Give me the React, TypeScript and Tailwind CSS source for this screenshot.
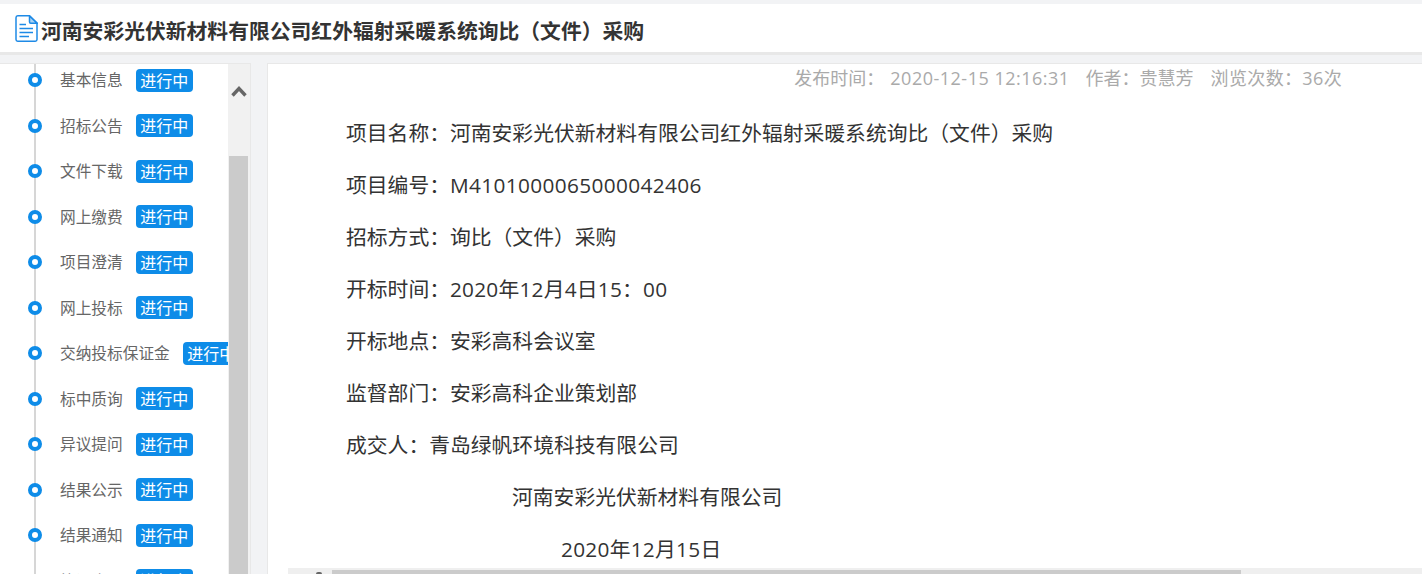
const F = { fontFamily: '"Noto Sans CJK SC", "Liberation Sans", sans-serif' };
const L = { fontFamily: '"Open Sans", "Noto Sans CJK SC", sans-serif' };

const steps = ["基本信息", "招标公告", "文件下载", "网上缴费", "项目澄清", "网上投标", "交纳投标保证金", "标中质询", "异议提问", "结果公示", "结果通知", "签订合同"];

function DocIcon() {
  return (
    <svg width="23" height="27" viewBox="0 0 23 27" fill="none" stroke="#1e8ae6" strokeWidth="1.5">
      <path d="M2.8.8H14.5L22 8V24.5a1.7 1.7 0 0 1-1.7 1.7H2.7A1.7 1.7 0 0 1 1 24.5V2.7A1.9 1.9 0 0 1 2.8.8Z" />
      <path d="M14.5 1V7a1.2 1.2 0 0 0 1.2 1.2H22Z" fill="#a9d3f5" />
      <path d="M4.5 9.5H11M4.5 13.5H18M4.5 17.5H18M4.5 21.5H14" strokeWidth="1.7" />
    </svg>
  );
}

const lines: [string, string, string][] = [
  ["项目名称：", "河南安彩光伏新材料有限公司红外辐射采暖系统询比（文件）采购", ""],
  ["项目编号：", "M4101000065000042406", "tracking-[0.35px]"],
  ["招标方式：", "询比（文件）采购", ""],
  ["开标时间：", "2020年12月4日15：00", "tracking-[0.22px]"],
  ["开标地点：", "安彩高科会议室", ""],
  ["监督部门：", "安彩高科企业策划部", ""],
  ["成交人：", "青岛绿帆环境科技有限公司", ""],
];

export default function App() {
  return (
    <div style={F} className="w-[1422px] h-[574px] overflow-hidden bg-[#f2f3f5] flex flex-col">
      <div className="mt-[4px] h-[48px] shrink-0 bg-white border-b-[3px] border-[#e8e8e8] box-content flex items-center pl-[15px]">
        <DocIcon />
        <h1 className="ml-[3px] mt-[5px] text-[20.8px] font-bold text-[#333] whitespace-nowrap">河南安彩光伏新材料有限公司红外辐射采暖系统询比（文件）采购</h1>
      </div>
      <div className="mt-[8px] flex flex-1 min-h-0">
        <aside className="w-[251px] bg-white border-r border-t border-[#e8e8e8] flex shrink-0 overflow-hidden">
          <div className="w-[228px] shrink-0 overflow-hidden relative">
            <div className="absolute left-[34px] top-0 w-[2px] h-full bg-[#d6d6d6]" />
            <div className="-mt-[6.5px]">
              {steps.map((s) => (
                <div key={s} className="h-[45.5px] flex items-center relative whitespace-nowrap">
                  <span className="ml-[28px] w-[14px] h-[14px] rounded-full border-[4px] border-[#0e8ce8] bg-white shrink-0" />
                  <span className="ml-[18px] text-[15.7px] text-[#666]">{s}</span>
                  <span className="ml-[13px] h-[23px] w-[57px] shrink-0 rounded-[4px] bg-[#0e8ce8] text-white text-[16px] leading-[23px] text-center">进行中</span>
                </div>
              ))}
            </div>
          </div>
          <div className="w-[22px] bg-[#f1f1f1] pl-[1px] flex flex-col items-start">
            <svg className="mt-[20px] ml-[2px]" width="16" height="13" viewBox="0 0 16 13" fill="none" stroke="#666" strokeWidth="3.4">
              <path d="M1.5 11.5 8 4.5l6.5 7" />
            </svg>
            <div className="mt-[59px] w-[19px] flex-1 bg-[#cbcbcb]" />
          </div>
        </aside>
        <main className="ml-[16px] flex-1 min-w-0 bg-white border-l border-t border-[#e8e8e8] relative overflow-hidden">
          <div style={L} className="absolute right-[80px] top-[1px] flex text-[18px] leading-[26px] text-[#aaa] whitespace-nowrap">
            <span>发布时间：</span>
            <span className="ml-[6px] tracking-[0.5px]">2020-12-15 12:16:31</span>
            <span className="ml-[16px]">作者：贵慧芳</span>
            <span className="ml-[17px] tracking-[0.35px]">浏览次数：36次</span>
          </div>
          <div style={L} className="pt-[43px] text-[20.8px] text-[#333]">
            {lines.map(([a, b, c]) => (
              <p key={a} className="pl-[78px] h-[52px] leading-[52px] whitespace-nowrap">
                {a}
                <span className={c}>{b}</span>
              </p>
            ))}
            <p className="pl-[244px] h-[52px] leading-[52px] whitespace-nowrap">河南安彩光伏新材料有限公司</p>
            <p className="pl-[293px] h-[52px] leading-[52px] whitespace-nowrap tracking-[0.27px]">2020年12月15日</p>
          </div>
          <div className="absolute left-[20px] right-0 bottom-0 h-[6px] bg-[#efefef] flex">
            <div className="w-[44px] relative">
              <span className="absolute left-[28px] top-[4px] w-[6px] h-[2px] bg-[#666] rounded-t-sm" />
            </div>
            <div className="mt-[2px] w-[909px] bg-[#cbcbcb]" />
          </div>
        </main>
      </div>
    </div>
  );
}
